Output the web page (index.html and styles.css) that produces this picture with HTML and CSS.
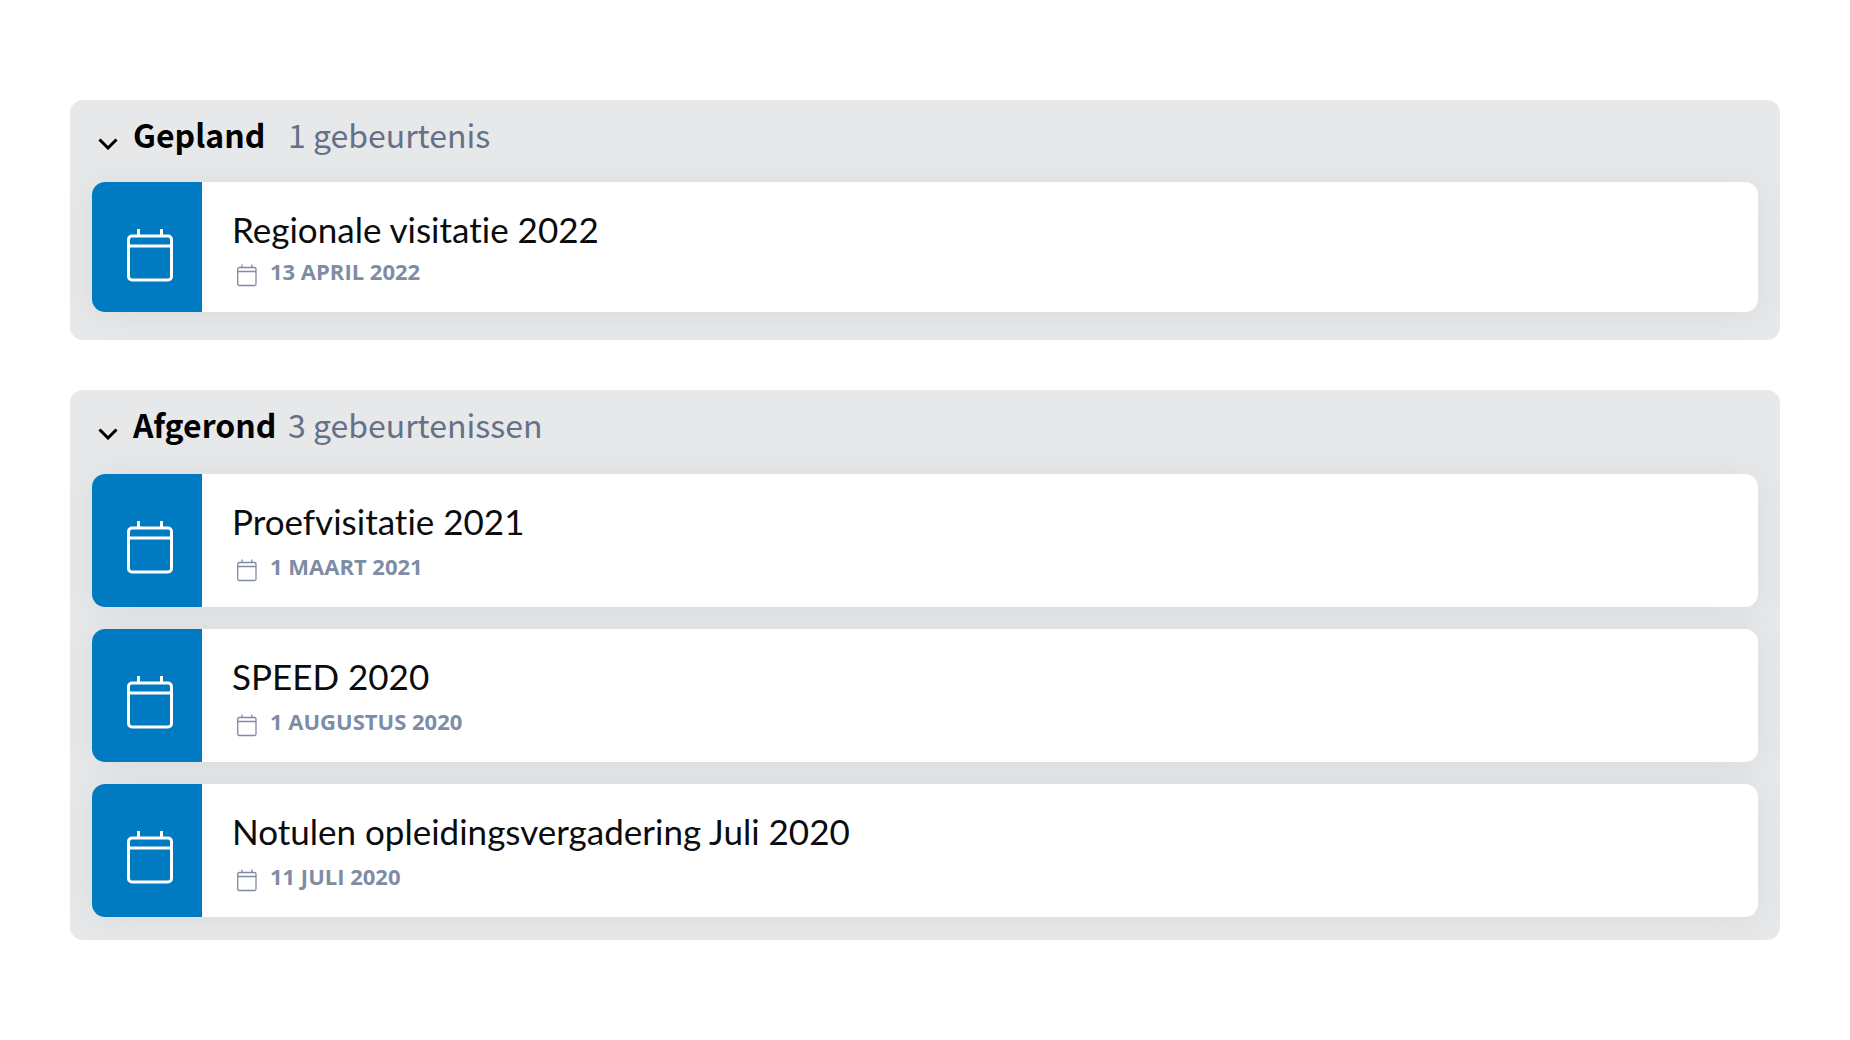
FILE: index.html
```html
<!DOCTYPE html>
<html lang="nl">
<head>
<meta charset="utf-8">
<meta name="viewport" content="width=device-width, initial-scale=1">
<title>Gebeurtenissen</title>
<link rel="stylesheet" href="styles.css">
</head>
<body>
<svg class="sprite" aria-hidden="true">
  <symbol id="calendar" viewBox="0 0 48 54">
    <rect x="2.500" y="8" width="43" height="44" rx="3.500"/>
    <path d="M2.500 18H45.500M12.500 1V8M35.500 1V8"/>
  </symbol>
  <symbol id="calendar-small" viewBox="0 0 20 23">
    <rect x=".7" y="3.500" width="18.300" height="18" rx="1.500"/>
    <path d="M.7 7.500H19M5 .5V3.500M14.800 .5V3.500"/>
  </symbol>
  <symbol id="chevron" viewBox="0 0 20 12">
    <path d="M1.500 1.500L10 10L18.500 1.500"/>
  </symbol>
</svg>
<main class="page">
  <section class="group group--planned">
    <h2 class="group__heading">
      <button class="group__toggle" type="button" aria-expanded="true">
        <svg class="group__chevron" aria-hidden="true"><use href="#chevron"/></svg>
        <span class="group__name">Gepland</span>
        <span class="group__count">1 gebeurtenis</span>
      </button>
    </h2>
    <ul class="events">
      <li class="event">
        <div class="event__badge"><svg class="event__icon" aria-hidden="true"><use href="#calendar"/></svg></div>
        <div class="event__body">
          <h3 class="event__title">Regionale visitatie 2022</h3>
          <div class="event__date"><svg class="event__date-icon" aria-hidden="true"><use href="#calendar-small"/></svg><time datetime="2022-04-13">13 april 2022</time></div>
        </div>
      </li>
    </ul>
  </section>
  <section class="group">
    <h2 class="group__heading">
      <button class="group__toggle" type="button" aria-expanded="true">
        <svg class="group__chevron" aria-hidden="true"><use href="#chevron"/></svg>
        <span class="group__name">Afgerond</span>
        <span class="group__count">3 gebeurtenissen</span>
      </button>
    </h2>
    <ul class="events">
      <li class="event">
        <div class="event__badge"><svg class="event__icon" aria-hidden="true"><use href="#calendar"/></svg></div>
        <div class="event__body">
          <h3 class="event__title">Proefvisitatie 2021</h3>
          <div class="event__date"><svg class="event__date-icon" aria-hidden="true"><use href="#calendar-small"/></svg><time datetime="2021-03-01">1 maart 2021</time></div>
        </div>
      </li>
      <li class="event">
        <div class="event__badge"><svg class="event__icon" aria-hidden="true"><use href="#calendar"/></svg></div>
        <div class="event__body">
          <h3 class="event__title">SPEED 2020</h3>
          <div class="event__date"><svg class="event__date-icon" aria-hidden="true"><use href="#calendar-small"/></svg><time datetime="2020-08-01">1 augustus 2020</time></div>
        </div>
      </li>
      <li class="event">
        <div class="event__badge"><svg class="event__icon" aria-hidden="true"><use href="#calendar"/></svg></div>
        <div class="event__body">
          <h3 class="event__title">Notulen opleidingsvergadering Juli 2020</h3>
          <div class="event__date"><svg class="event__date-icon" aria-hidden="true"><use href="#calendar-small"/></svg><time datetime="2020-07-11">11 juli 2020</time></div>
        </div>
      </li>
    </ul>
  </section>
</main>
</body>
</html>
```
FILE: styles.css
```css
* {
  box-sizing: border-box;
}

body {
  margin: 0;
  background: #fff;
  color: #0b0c0d;
}

svg {
  fill: none;
  stroke: currentColor;
  flex: none;
}

.sprite {
  display: none;
}

.page {
  display: flex;
  flex-direction: column;
  gap: 50px;
  padding: 100px 70px;
}

.group {
  padding: 0 22px 23px;
  border-radius: 13px;
  background: #e7e8ea;
}

.group--planned {
  padding-bottom: 28px;
}

.group__heading {
  margin: 0;
  font: inherit;
}

.group__toggle {
  display: grid;
  grid-template-columns: 20px 140px auto;
  column-gap: 15px;
  align-items: start;
  justify-content: start;
  width: 100%;
  height: 84px;
  padding: 10px 6px 0;
  border: 0;
  background: none;
  color: #000;
  font: 32px/48px "Noto Sans CJK SC", "Noto Sans", sans-serif;
  text-align: left;
  cursor: pointer;
}

.group--planned .group__toggle {
  height: 82px;
}

.group__chevron {
  width: 20px;
  height: 12px;
  margin-top: 28px;
  stroke-width: 3;
}

.group__name {
  font-weight: 700;
}

.group__count {
  color: #647186;
}

.events {
  display: flex;
  flex-direction: column;
  gap: 22px;
  margin: 0;
  padding: 0;
  list-style: none;
}

.event {
  display: flex;
  min-height: 133px;
  border-radius: 13px;
  background: #fff;
  box-shadow: 0 2px 36px rgba(0, 0, 0, 0.06);
}

.group--planned .event {
  min-height: 130px;
}

.event__badge {
  flex: none;
  width: 110px;
  padding: 46px 28px 0 34px;
  border-radius: 13px 0 0 13px;
  background: #007bc1;
  color: #fff;
}

.event__icon {
  display: block;
  width: 48px;
  height: 54px;
  stroke-width: 3;
}

.event__body {
  display: flex;
  flex-direction: column;
  gap: 5px;
  padding: 25px 30px 0;
}

.group--planned .event__body {
  gap: 2px;
}

.event__title {
  margin: 0;
  font: 400 35px/44px Lato, sans-serif;
  font-variant-ligatures: none;
}

.event__date {
  display: flex;
  gap: 13px;
  padding-left: 5px;
  color: #7d8da5;
  font: 700 22px/36px "Open Sans", sans-serif;
  text-transform: uppercase;
}

.event__date-icon {
  width: 20px;
  height: 23px;
  margin-top: 11px;
  stroke-width: 1.3;
}
```
